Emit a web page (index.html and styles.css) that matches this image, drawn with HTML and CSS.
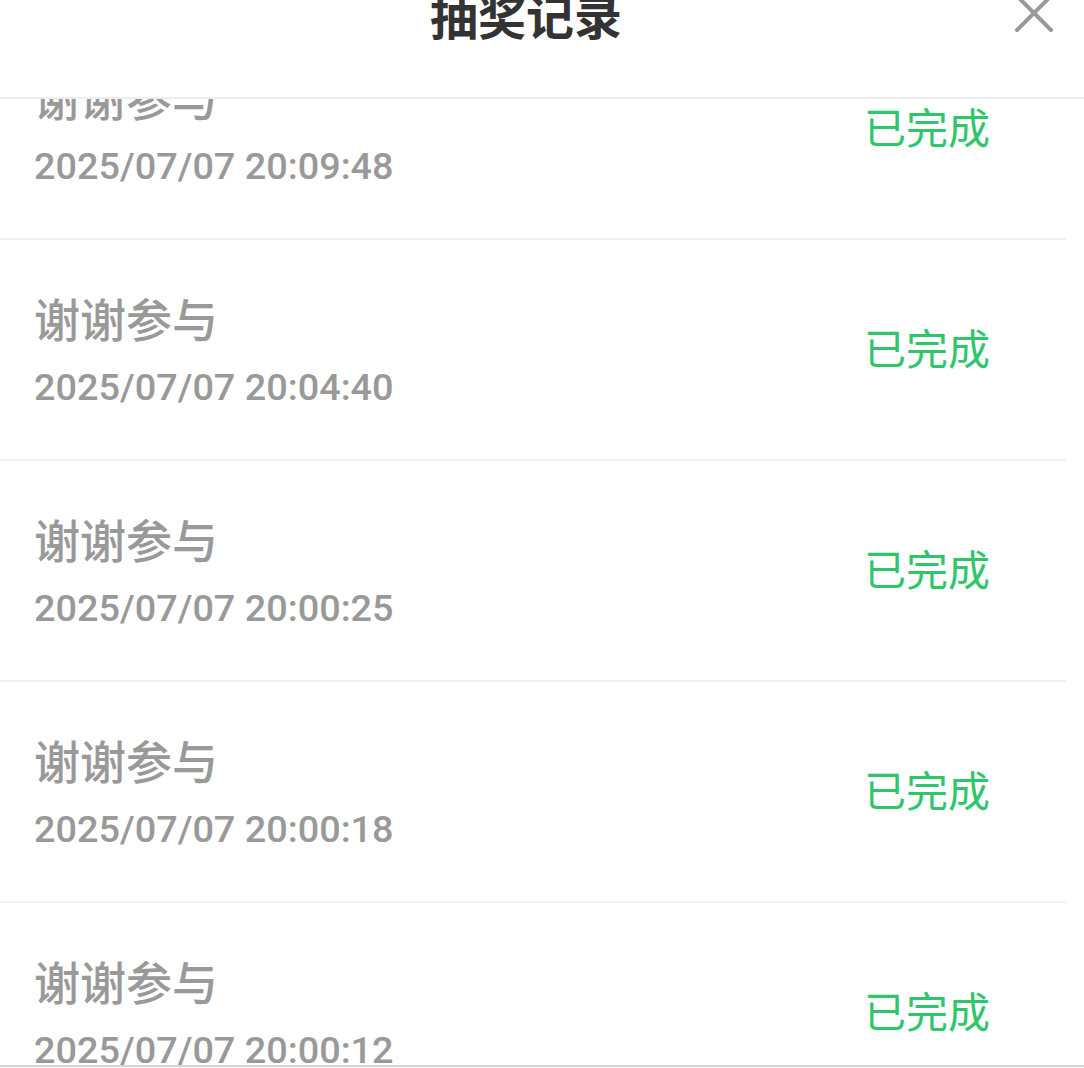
FILE: index.html
```html
<!DOCTYPE html>
<html lang="zh-CN">
<head>
  <meta charset="UTF-8">
  <meta name="viewport" content="width=device-width, initial-scale=1.0">
  <title>抽奖记录</title>
  <link rel="stylesheet" href="styles.css">
</head>
<body>
  <div class="sheet">
    <header class="sheet-head">
      <h1 class="sheet-title">抽奖记录</h1>
      <a href="#" class="close-btn" aria-label="关闭">
        <svg viewBox="0 0 40 40" width="40" height="40">
          <path d="M3 3 L37 37 M37 3 L3 37" stroke="#999" stroke-width="4" stroke-linecap="round" fill="none"/>
        </svg>
      </a>
    </header>

    <div class="records">
      <ul class="record-list">
        <li class="record">
          <div class="record-info">
            <p class="record-name">谢谢参与</p>
            <p class="record-time">2025/07/07 20:09:48</p>
          </div>
          <span class="record-status">已完成</span>
        </li>
        <li class="record">
          <div class="record-info">
            <p class="record-name">谢谢参与</p>
            <p class="record-time">2025/07/07 20:04:40</p>
          </div>
          <span class="record-status">已完成</span>
        </li>
        <li class="record">
          <div class="record-info">
            <p class="record-name">谢谢参与</p>
            <p class="record-time">2025/07/07 20:00:25</p>
          </div>
          <span class="record-status">已完成</span>
        </li>
        <li class="record">
          <div class="record-info">
            <p class="record-name">谢谢参与</p>
            <p class="record-time">2025/07/07 20:00:18</p>
          </div>
          <span class="record-status">已完成</span>
        </li>
        <li class="record">
          <div class="record-info">
            <p class="record-name">谢谢参与</p>
            <p class="record-time">2025/07/07 20:00:12</p>
          </div>
          <span class="record-status">已完成</span>
        </li>
        <li class="record">
          <div class="record-info">
            <p class="record-name">谢谢参与</p>
            <p class="record-time">2025/07/07 19:58:03</p>
          </div>
          <span class="record-status">已完成</span>
        </li>
      </ul>
    </div>

    <div class="sheet-foot"></div>
  </div>
</body>
</html>
```

FILE: styles.css
```css
html, body {
  margin: 0;
  padding: 0;
  height: 100%;
  overflow: hidden;
}
body {
  font-family: "Noto Sans CJK SC", sans-serif;
  background-color: #ffffff;
}
.sheet {
  display: flex;
  flex-direction: column;
  height: 1068px;
  overflow: hidden;
}
/* header is partly scrolled past the top edge */
.sheet-head {
  position: relative;
  z-index: 2;
  flex: none;
  box-sizing: border-box;
  height: 168px;
  margin-top: -69px;
  padding-right: 32px;
  display: flex;
  justify-content: center;
  align-items: center;
  background-color: #ffffff;
  border-bottom: 2px solid #eeeeee;
}
.sheet-title {
  margin: 0;
  font-size: 48px;
  font-weight: bold;
  color: #333;
  line-height: 1;
}
.close-btn {
  position: absolute;
  right: 30px;
  top: 50%;
  margin-top: -21px;
  width: 40px;
  height: 40px;
  display: block;
}
.close-btn svg {
  display: block;
}
.records {
  flex: 1;
  overflow: hidden;
}
/* list is scrolled, first row sits under the header */
.record-list {
  list-style: none;
  margin: -80px 18px 0 0;
  padding: 0;
}
.record {
  height: 219px;
  display: flex;
  align-items: center;
  justify-content: space-between;
  padding: 0 76px 0 34px;
  border-bottom: 2px solid #f2f2f2;
}
.record-info p {
  margin: 0;
}
.record-name {
  font-size: 46px;
  font-weight: 500;
  color: #999;
  line-height: 56px;
}
.record-time {
  font-family: Roboto, "Noto Sans CJK SC", sans-serif;
  font-size: 37.8px;
  font-weight: 500;
  color: #999;
  line-height: 48px;
  margin-top: 18px !important;
}
.record-status {
  font-size: 42px;
  color: #2ec56b;
  line-height: 1;
  margin-bottom: 5px;
}
.sheet-foot {
  flex: none;
  height: 1px;
  border-top: 2px solid #d4d4d4;
}
```
